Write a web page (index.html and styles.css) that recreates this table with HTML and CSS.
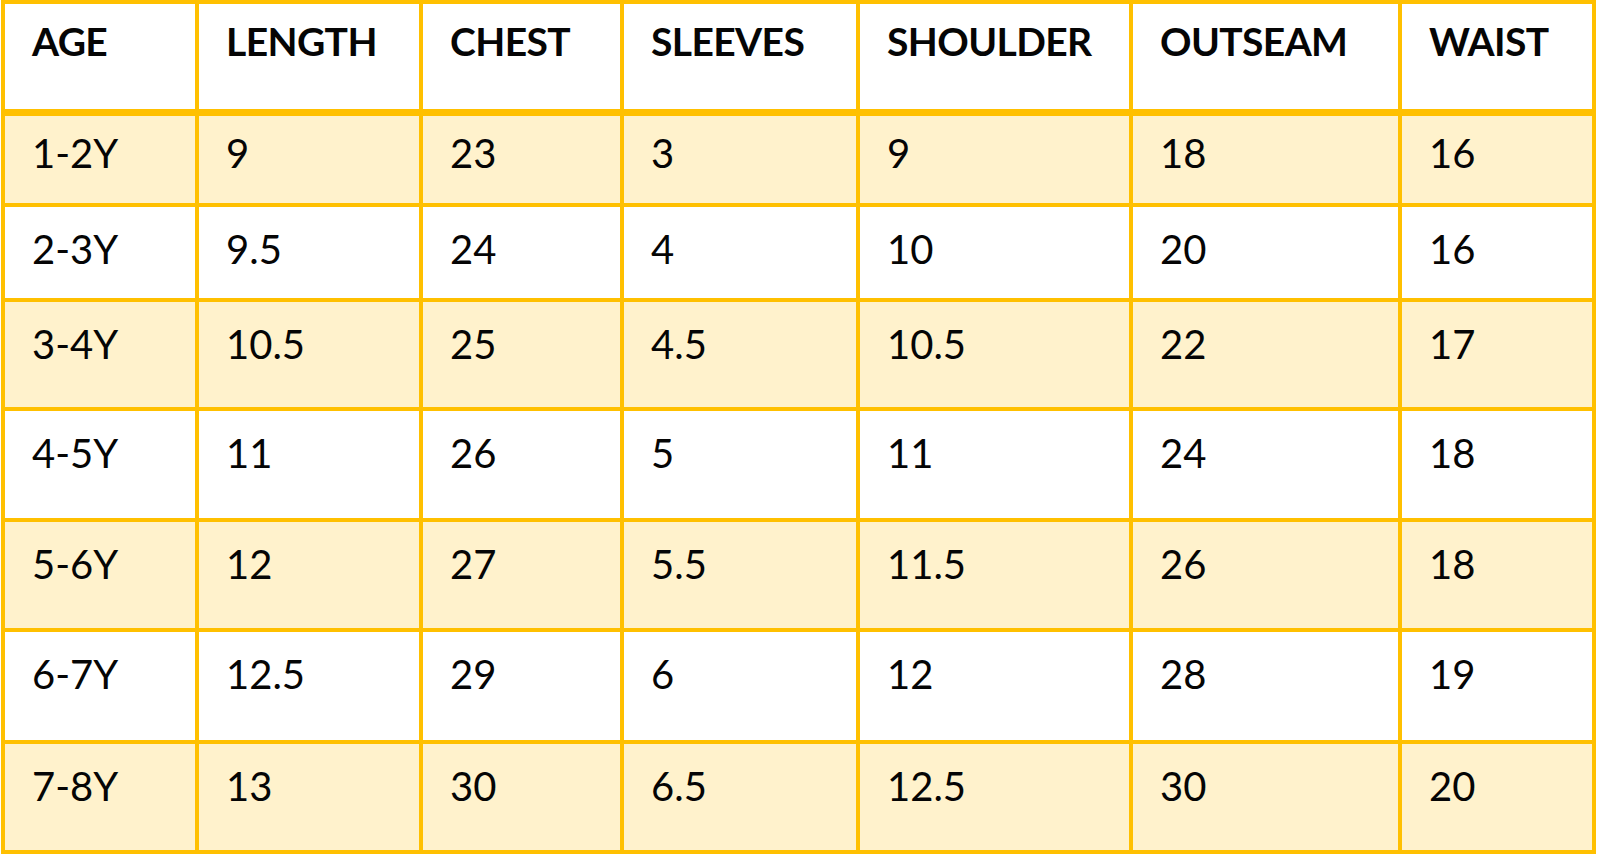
FILE: index.html
```html
<!DOCTYPE html>
<html lang="en">
<head>
<meta charset="utf-8">
<title>Size chart</title>
<link rel="stylesheet" href="styles.css">
</head>
<body>
<table class="size-chart">
  <colgroup>
    <col class="c-age"><col class="c-length"><col class="c-chest"><col class="c-sleeves"><col class="c-shoulder"><col class="c-outseam"><col class="c-waist">
  </colgroup>
  <thead>
    <tr>
      <th>AGE</th><th>LENGTH</th><th>CHEST</th><th>SLEEVES</th><th>SHOULDER</th><th>OUTSEAM</th><th>WAIST</th>
    </tr>
  </thead>
  <tbody>
    <tr class="shade"><td>1-2Y</td><td>9</td><td>23</td><td>3</td><td>9</td><td>18</td><td>16</td></tr>
    <tr><td>2-3Y</td><td>9.5</td><td>24</td><td>4</td><td>10</td><td>20</td><td>16</td></tr>
    <tr class="shade"><td>3-4Y</td><td>10.5</td><td>25</td><td>4.5</td><td>10.5</td><td>22</td><td>17</td></tr>
    <tr><td>4-5Y</td><td>11</td><td>26</td><td>5</td><td>11</td><td>24</td><td>18</td></tr>
    <tr class="shade"><td>5-6Y</td><td>12</td><td>27</td><td>5.5</td><td>11.5</td><td>26</td><td>18</td></tr>
    <tr><td>6-7Y</td><td>12.5</td><td>29</td><td>6</td><td>12</td><td>28</td><td>19</td></tr>
    <tr class="shade"><td>7-8Y</td><td>13</td><td>30</td><td>6.5</td><td>12.5</td><td>30</td><td>20</td></tr>
  </tbody>
</table>
</body>
</html>
```

FILE: styles.css
```css
html, body {
  margin: 0;
  padding: 0;
  background: #ffffff;
}

.size-chart {
  margin: 0 0 0 1px;
  border-collapse: separate;
  border-spacing: 4px;
  background: #ffc000;
  table-layout: fixed;
  width: 1595px;
  font-family: Lato, "Open Sans", sans-serif;
  font-size: 40px;
  line-height: 1;
  color: #050505;
}

.c-age { width: 190px; }
.c-length { width: 220px; }
.c-chest { width: 197px; }
.c-sleeves { width: 232px; }
.c-shoulder { width: 269px; }
.c-outseam { width: 265px; }
.c-waist { width: 190px; }

.size-chart th,
.size-chart td {
  padding: 0 0 0 27px;
  text-align: left;
  vertical-align: top;
  background: #ffffff;
  box-sizing: border-box;
}

.size-chart th {
  font-weight: 700;
  font-size: 39px;
  letter-spacing: -0.6px;
  height: 108px;
  padding-top: 18px;
  border-bottom: 3px solid #ffc000;
}

.size-chart td {
  font-weight: 400;
  padding-top: 22px;
}

.size-chart .shade td {
  background: #fff2cc;
}

.size-chart tbody tr:nth-child(1) td { height: 87px; padding-top: 17px; }
.size-chart tbody tr:nth-child(2) td { height: 91px; }
.size-chart tbody tr:nth-child(3) td { height: 105px; }
.size-chart tbody tr:nth-child(4) td { height: 107px; }
.size-chart tbody tr:nth-child(5) td { height: 106px; }
.size-chart tbody tr:nth-child(6) td { height: 108px; }
.size-chart tbody tr:nth-child(7) td { height: 106px; }
```
